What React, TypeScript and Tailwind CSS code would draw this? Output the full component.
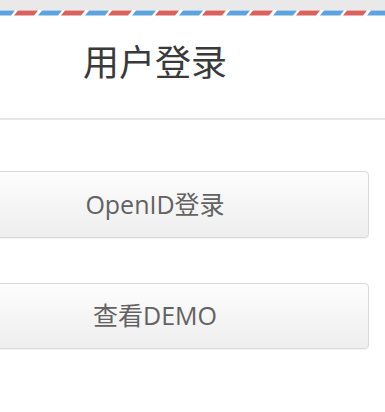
import React from "react";

function Stripe() {
  const segs = [];
  for (let i = -1; i < 10; i++) {
    const x = i * 47 - 9;
    segs.push(
      <polygon key={"b" + i} points={`${x + 4},0 ${x + 24},0 ${x + 20},5 ${x},5`} fill="#5fa3dd" />
    );
    segs.push(
      <polygon key={"r" + i} points={`${x + 27},0 ${x + 47},0 ${x + 43},5 ${x + 23},5`} fill="#d9625e" />
    );
  }
  return (
    <svg width="385" height="6" viewBox="0 0 385 6" className="block">
      <rect width="385" height="6" fill="#ffffff" />
      <g transform="translate(0,0.5)">{segs}</g>
    </svg>
  );
}

export default function App() {
  return (
    <div
      className="w-[385px] h-[412px] overflow-hidden bg-white"
      style={{ fontFamily: '"Open Sans", "Noto Sans CJK SC", sans-serif' }}
    >
      <div className="h-[10px] bg-[#e9e9e9]" />
      <Stripe />
      <div className="h-[104px] border-b-2 border-[#e6e6e6]">
        <div className="ml-[-59px] w-[428px] pt-[24px] text-center text-[36px] leading-[46px] text-[#3a3a3a]">
          用户登录
        </div>
      </div>
      <div className="ml-[-59px] w-[428px] pt-[51px] flex flex-col gap-[45px]">
        <button className="h-[67px] w-full rounded-[4px] border border-[#dadada] bg-gradient-to-b from-[#fdfdfd] to-[#eeeeee] text-[25px] text-[#626262] shadow-[0_1px_1px_rgba(0,0,0,0.05)]">
          OpenID登录
        </button>
        <button className="h-[66px] w-full rounded-[4px] border border-[#dadada] bg-gradient-to-b from-[#fdfdfd] to-[#eeeeee] text-[25px] text-[#626262] shadow-[0_1px_1px_rgba(0,0,0,0.05)]">
          查看DEMO
        </button>
      </div>
    </div>
  );
}
